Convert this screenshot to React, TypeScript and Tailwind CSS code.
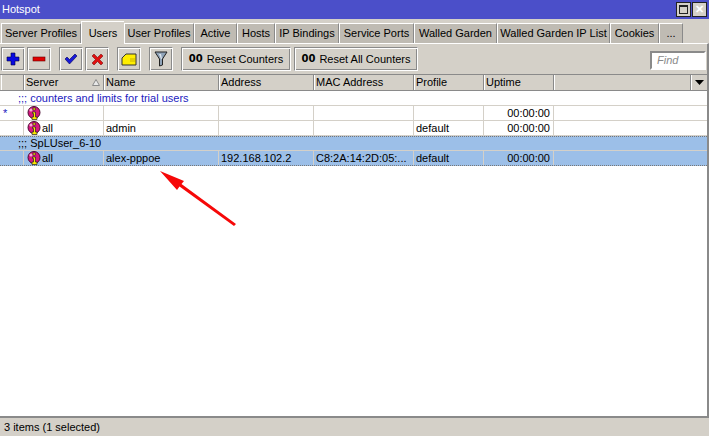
import React from 'react';

const tabs = [
  { label: 'Server Profiles', w: 'w-[80px]' },
  { label: 'Users', w: 'w-[43px]', active: true },
  { label: 'User Profiles', w: 'w-[70px]' },
  { label: 'Active', w: 'w-[43px]' },
  { label: 'Hosts', w: 'w-[38px]' },
  { label: 'IP Bindings', w: 'w-[64px]' },
  { label: 'Service Ports', w: 'w-[75px]' },
  { label: 'Walled Garden', w: 'w-[83px]' },
  { label: 'Walled Garden IP List', w: 'w-[113px]' },
  { label: 'Cookies', w: 'w-[49px]' },
  { label: '...', w: 'w-[24px]' },
];

const columns = [
  { label: '', w: 'w-[23px]' },
  { label: 'Server', w: 'w-[80px]' },
  { label: 'Name', w: 'w-[115px]' },
  { label: 'Address', w: 'w-[95px]' },
  { label: 'MAC Address', w: 'w-[100px]' },
  { label: 'Profile', w: 'w-[70px]' },
  { label: 'Uptime', w: 'w-[70px]' },
];

function ToolButton({ children, className = 'w-[24px]' }: { children: React.ReactNode; className?: string }) {
  return (
    <div className={`flex h-[24px] items-center justify-center border border-t-[#8a8a8a] border-l-[#8a8a8a] border-r-white border-b-white bg-[#d4d0c8] shadow-[inset_1px_1px_0_#fff,inset_-1px_-1px_0_#8a8a8a] ${className}`}>
      {children}
    </div>
  );
}

function UserIcon() {
  return (
    <svg width="14" height="14" viewBox="0 0 14 14" className="shrink-0">
      <circle cx="7" cy="6.500" r="6" fill="#d6167e" stroke="#4a0a30" />
      <circle cx="4" cy="4" r="1.600" fill="#f7a8d2" />
      <rect x="6" y="2" width="2.500" height="2" fill="#ffe600" stroke="#222" strokeWidth="0.6" />
      <path d="M5.500 6H8.500V11H10V13.500H5V11H6.500V7.500H5.500z" fill="#ffe600" stroke="#222" strokeWidth="0.7" />
    </svg>
  );
}

function Cell({ w, children, className = '' }: { w: string; children?: React.ReactNode; className?: string }) {
  return (
    <div className={`flex h-full shrink-0 items-center overflow-hidden whitespace-nowrap border-r border-[#d4d0c8] pl-[2px] ${w} ${className}`}>
      {children}
    </div>
  );
}

function Row({ mark, server, name, address, mac, profile, uptime, selected }: {
  mark?: string; server?: string; name?: string; address?: string; mac?: string; profile?: string; uptime?: string; selected?: boolean;
}) {
  return (
    <div className={`flex h-[15px] pl-[1px] ${selected ? 'bg-[#9cbfe8] border-b border-dotted border-[#777]' : 'border-b border-[#d4d0c8]'}`}>
      <Cell w={columns[0].w} className="text-[#2020c0]">{mark}</Cell>
      <Cell w={columns[1].w} className="pl-[3px]"><UserIcon /><span className="ml-[1px]">{server}</span></Cell>
      <Cell w={columns[2].w}>{name}</Cell>
      <Cell w={columns[3].w}>{address}</Cell>
      <Cell w={columns[4].w}>{mac}</Cell>
      <Cell w={columns[5].w}>{profile}</Cell>
      <Cell w={columns[6].w} className="justify-end pr-[3px]">{uptime}</Cell>
    </div>
  );
}

export default function App() {
  return (
    <div className="flex h-[436px] w-[709px] flex-col overflow-hidden bg-[#d4d0c8] font-['Liberation_Sans',sans-serif] text-[11px] leading-none text-black">
      {/* Title bar */}
      <div className="flex h-[19px] shrink-0 items-center justify-between bg-[#4b4fc9] pl-[2px] pr-[2px] text-white">
        <span className="text-[11px]">Hotspot</span>
        <div className="flex gap-[1px]">
          <div className="flex h-[15px] w-[15px] items-center justify-center border border-[#222] bg-[#d4d0c8]">
            <div className="h-[9px] w-[9px] border border-t-2 border-[#222]" />
          </div>
          <div className="flex h-[15px] w-[15px] items-center justify-center border border-[#222] bg-[#d4d0c8] text-[11px] font-bold">✕</div>
        </div>
      </div>

      {/* Tabs */}
      <div className="flex h-[24px] shrink-0 items-end pl-[1px] pt-[2px]">
        {tabs.map(t => (
          <div
            key={t.label}
            className={`flex shrink-0 items-center justify-center border-l border-t border-white ${t.w} ${t.active ? 'relative z-10 -mb-[1px] h-[23px] bg-[#d4d0c8]' : 'h-[20px] border-r border-r-[#8a8a8a] bg-[#bfbbb3]'}`}
          >
            {t.label}
          </div>
        ))}
      </div>

      {/* Panel */}
      <div className="flex min-h-0 flex-1 flex-col border-t border-white border-r-2 border-r-[#8a8a8a]">
        {/* Toolbar */}
        <div className="flex h-[30px] shrink-0 items-center pl-[1px] pr-[1px]">
          <ToolButton className="w-[24px]">
            <svg width="14" height="14" viewBox="0 0 14 14"><path d="M5 1h4v4h4v4H9v4H5V9H1V5h4z" fill="#0a0ae0" stroke="#000040" strokeWidth="0.6" /></svg>
          </ToolButton>
          <ToolButton className="ml-[2px] w-[24px]">
            <svg width="14" height="6" viewBox="0 0 14 6"><rect x="1" y="1" width="12" height="4" fill="#e00000" stroke="#600" strokeWidth="0.6" /></svg>
          </ToolButton>
          <ToolButton className="ml-[8px] w-[24px]">
            <svg width="14" height="12" viewBox="0 0 14 12"><path d="M1 6l2-2 2.500 2.500L11 1l2 2-7.500 8z" fill="#1818d8" stroke="#000050" strokeWidth="0.6" /></svg>
          </ToolButton>
          <ToolButton className="ml-[2px] w-[24px]">
            <svg width="13" height="13" viewBox="0 0 13 13"><path d="M1 3l2-2 3.500 3.500L10 1l2 2-3.500 3.500L12 10l-2 2-3.500-3.500L3 12l-2-2 3.500-3.500z" fill="#e01010" stroke="#600" strokeWidth="0.5" /></svg>
          </ToolButton>
          <ToolButton className="ml-[8px] w-[24px]">
            <svg width="16" height="13" viewBox="0 0 16 13"><path d="M1 5l4-4h10v11H1z" fill="#ffee00" stroke="#333" /><path d="M9 6h5M9 8h5" stroke="#c8b000" /></svg>
          </ToolButton>
          <ToolButton className="ml-[8px] w-[24px]">
            <svg width="14" height="16" viewBox="0 0 14 16"><path d="M1 1h12L8.500 8v6L5.500 15V8z" fill="#8fa3b8" stroke="#222" /><path d="M5 3h2l1 5H7z" fill="#dce4ec" /></svg>
          </ToolButton>
          <ToolButton className="ml-[8px] w-[110px] gap-[4px]">
            <span className="font-['DejaVu_Sans',sans-serif] text-[10px] font-bold">00</span>
            <span>Reset Counters</span>
          </ToolButton>
          <ToolButton className="ml-[3px] w-[124px] gap-[4px]">
            <span className="font-['DejaVu_Sans',sans-serif] text-[10px] font-bold">00</span>
            <span>Reset All Counters</span>
          </ToolButton>
          <div className="ml-auto mt-[3px] flex h-[19px] w-[56px] items-center border-2 border-[#8a8a8a] border-r-white border-b-white bg-white pl-[5px] italic text-[#8a8a8a]">
            Find
          </div>
        </div>

        {/* Table */}
        <div className="relative flex min-h-0 flex-1 flex-col bg-white">
          <div className="flex h-[17px] shrink-0 border-y border-[#8a8a8a] bg-[#d4d0c8] pl-[1px]">
            {columns.map((c, i) => (
              <div key={i} className={`relative flex h-full shrink-0 items-center border-r border-[#8a8a8a] pl-[2px] shadow-[inset_1px_0_0_#fff] ${c.w}`}>
                {c.label}
                {c.label === 'Server' && (
                  <svg width="8" height="7" viewBox="0 0 8 7" className="absolute right-[3px] top-[4px]"><path d="M4 0.500L7.500 6.500H0.500z" fill="#e8e8e8" stroke="#8a8a8a" /></svg>
                )}
              </div>
            ))}
            <div className="flex-1 border-r border-[#8a8a8a] shadow-[inset_1px_0_0_#fff]" />
            <div className="flex w-[16px] items-center justify-center shadow-[inset_1px_0_0_#fff]">
              <svg width="9" height="5" viewBox="0 0 9 5"><path d="M0 0h9L4.500 5z" fill="#000" /></svg>
            </div>
          </div>

          <div className="flex h-[14px] shrink-0 items-center pl-[18px] text-[#2222c0]">;;; counters and limits for trial users</div>
          <div className="border-t border-[#d4d0c8]">
            <Row mark="*" uptime="00:00:00" />
            <Row server="all" name="admin" profile="default" uptime="00:00:00" />
          </div>
          <div className="flex h-[14px] shrink-0 items-center border-t border-dotted border-[#777] bg-[#9cbfe8] pl-[18px]">;;; SpLUser_6-10</div>
          <div className="border-t border-[#d4d0c8] bg-[#9cbfe8]">
            <Row selected server="all" name="alex-pppoe" address="192.168.102.2" mac="C8:2A:14:2D:05:..." profile="default" uptime="00:00:00" />
          </div>

          {/* Red annotation arrow */}
          <svg width="90" height="70" viewBox="0 0 90 70" className="absolute left-[155px] top-[94px]">
            <path d="M5 3L29 13L26.500 16L81 56L79 58L24.500 18.500L22 22z" fill="#f60808" />
          </svg>
        </div>
      </div>

      {/* Status bar */}
      <div className="flex h-[20px] shrink-0 items-center border-t-2 border-[#8a8a8a] pl-[4px]">3 items (1 selected)</div>
    </div>
  );
}
